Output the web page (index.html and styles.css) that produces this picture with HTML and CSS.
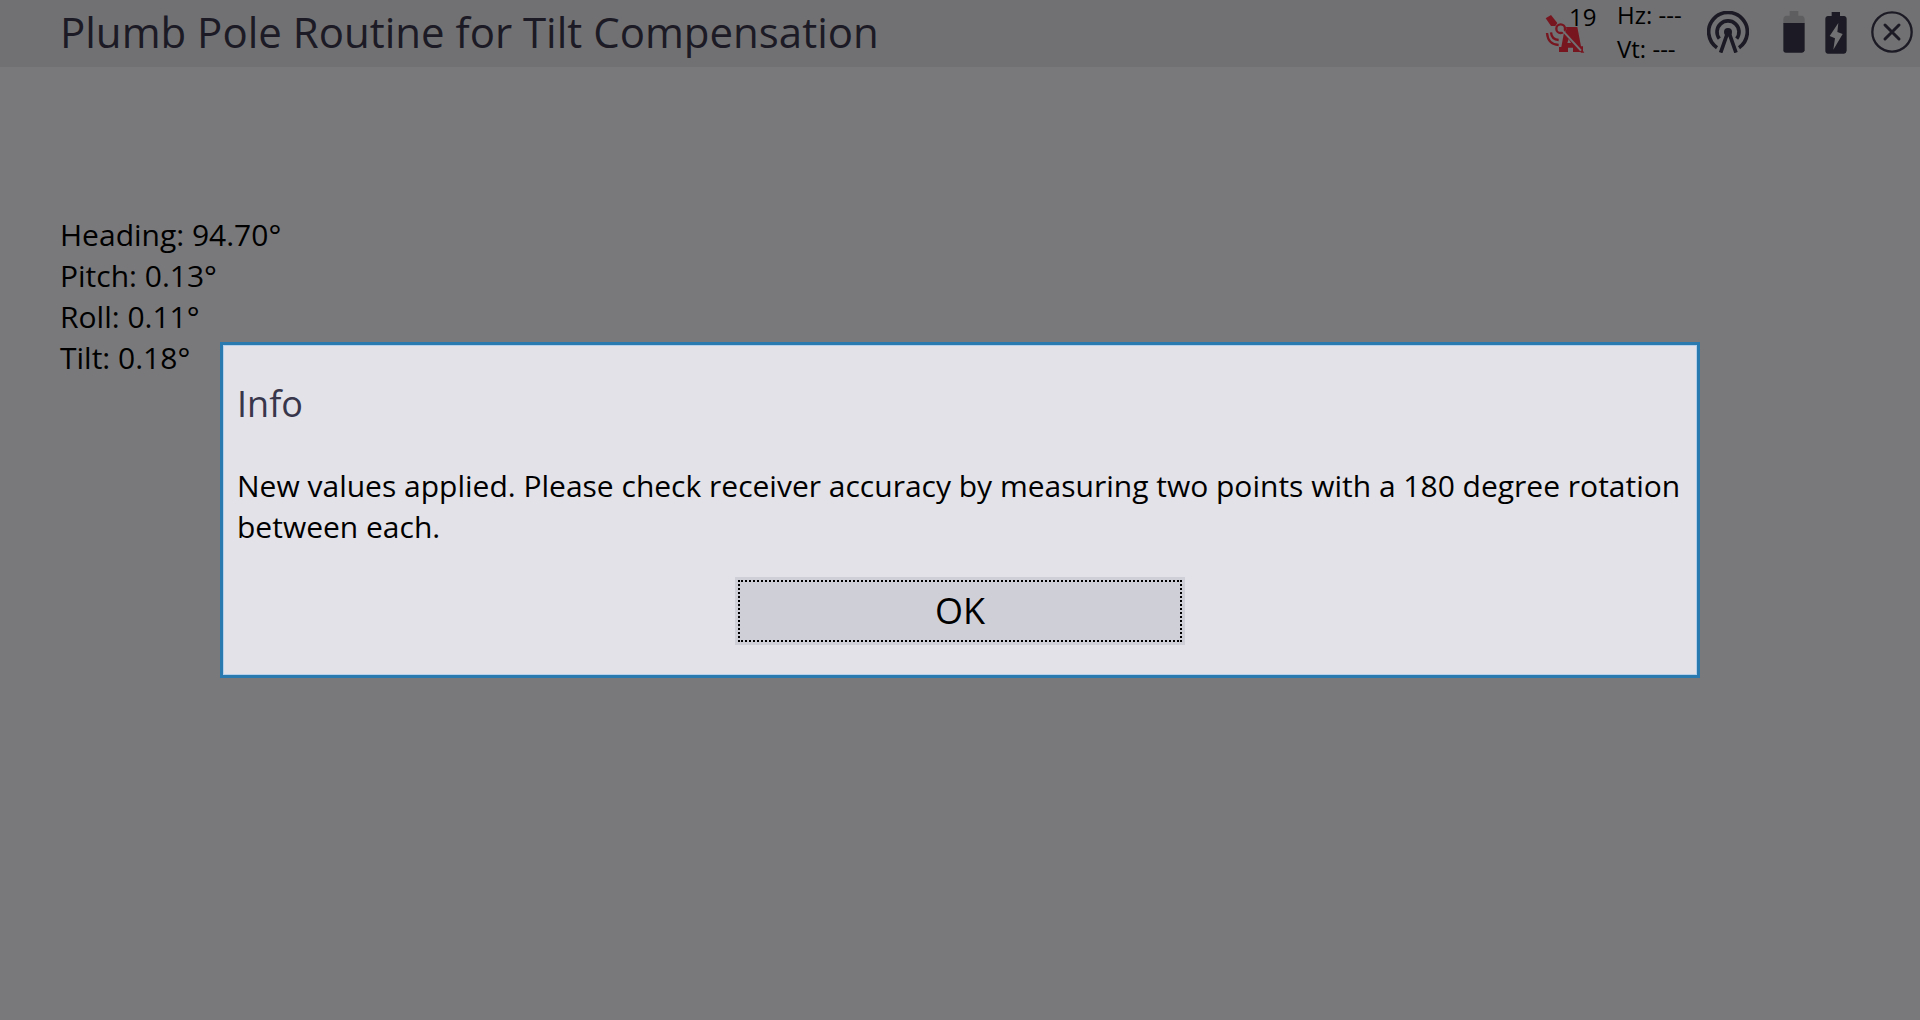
FILE: index.html
```html
<!DOCTYPE html>
<html lang="en">
<head>
<meta charset="utf-8">
<title>Plumb Pole Routine for Tilt Compensation</title>
<link rel="stylesheet" href="styles.css">
</head>
<body>
<header class="topbar">
  <h1 class="title">Plumb Pole Routine for Tilt Compensation</h1>
  <div class="status">
    <div class="satellites">
      <svg class="icon" viewBox="0 -6 126 126" aria-hidden="true">
        <g class="red-line">
          <path d="M18 58Q20 80 41 81"/>
          <path d="M6 60Q9 95 41 96"/>
        </g>
        <path class="red" d="M56 42H97L108 100H114V117H84V104H69V117H42V102H49L56 64Z"/>
        <path class="gap" d="M71 78L67 90H78Z"/>
        <path class="red" d="M57 50L66 46L118 119H108Z"/>
        <circle class="gap" cx="47" cy="47" r="17"/>
        <circle class="red-line" cx="47" cy="47" r="13"/>
        <path class="gap-line" d="M50 50L108 113"/>
        <path class="red" d="M2 16L18 6L37 30L31 39L18 39Z"/>
      </svg>
      <span class="count">19</span>
    </div>
    <div class="angles">
      <div>Hz: ---</div>
      <div>Vt: ---</div>
    </div>
    <svg class="icon antenna" viewBox="0 0 126 126" aria-hidden="true">
      <path class="dark-line" d="M30 110A58 58 0 1 1 96 110"/>
      <path class="dark-line" d="M37 83A33 33 0 1 1 89 83"/>
      <circle class="dark" cx="63" cy="63" r="12"/>
      <path class="dark-line" d="M63 62L41 125M65 62L87 125"/>
    </svg>
    <svg class="battery" viewBox="0 0 66 129" aria-hidden="true">
      <path class="spent" d="M20 0H46V14H58Q65 16 65 24V37H1V24Q1 16 8 14H20Z"/>
      <path class="dark" d="M1 36H65V118Q64 125 57 125H9Q1 125 1 118Z"/>
    </svg>
    <svg class="battery charging" viewBox="0 0 66 129" aria-hidden="true">
      <path class="dark" d="M20 3H45V15H57Q65 16 65 24V119Q64 127 57 128H9Q1 127 1 119V24Q1 16 9 15H20Z"/>
      <path class="gap" d="M40 36L14 75L30 82L25 116L53 69L37 63Z"/>
    </svg>
    <button class="close" type="button" aria-label="Close">
      <svg class="icon" viewBox="0 0 126 126" aria-hidden="true">
        <circle class="thin-line" cx="63" cy="63" r="59"/>
        <path class="cross-line" d="M42 42L84 84M84 42L42 84"/>
      </svg>
    </button>
  </div>
</header>
<main class="readings">
  <div>Heading: 94.70°</div>
  <div>Pitch: 0.13°</div>
  <div>Roll: 0.11°</div>
  <div>Tilt: 0.18°</div>
</main>
<div class="backdrop">
  <section class="dialog" role="alertdialog" aria-modal="true" aria-labelledby="info-title" aria-describedby="info-text">
    <h2 class="dialog-title" id="info-title">Info</h2>
    <p class="message" id="info-text">New values applied. Please check receiver accuracy by measuring two points with a 180 degree rotation between each.</p>
    <button class="ok" type="button"><span class="focus-ring">OK</span></button>
  </section>
</div>
</body>
</html>
```
FILE: styles.css
```css
* {
  box-sizing: border-box;
}

body {
  margin: 0;
  min-height: 100vh;
  background: #f2f2f6;
  color: #000;
  font-family: "Open Sans", "Noto Sans", sans-serif;
  font-size: 30px;
  line-height: 41px;
}

button {
  border: 0;
  padding: 0;
  font: inherit;
  color: inherit;
}

.topbar {
  display: flex;
  justify-content: space-between;
  padding: 0 7px 3px 60px;
  background: #e3e3e6;
}

.title {
  margin: 0;
  font-size: 42px;
  font-weight: 400;
  line-height: 64px;
  color: #38364a;
}

.status {
  display: flex;
  align-items: center;
  height: 64px;
}

.satellites {
  position: relative;
  display: flex;
  width: 72px;
}

.count {
  position: absolute;
  top: -11px;
  left: 24px;
  font-size: 24px;
  line-height: 34px;
}

.angles {
  width: 90px;
  font-size: 24px;
  line-height: 34px;
}

.icon {
  display: block;
  width: 42px;
  height: 42px;
}

.antenna {
  margin-right: 34px;
}

.battery {
  width: 22px;
  height: 43px;
}

.charging {
  margin: 0 24px 0 20px;
}

.close {
  background: none;
}

.red {
  fill: #f02c40;
}

.red-line {
  fill: none;
  stroke: #f02c40;
  stroke-width: 7;
}

.dark {
  fill: #38364a;
}

.spent {
  fill: #bcbcc0;
}

.gap {
  fill: #e3e3e6;
}

.gap-line {
  fill: none;
  stroke: #e3e3e6;
  stroke-width: 6;
}

.dark-line {
  fill: none;
  stroke: #38364a;
  stroke-width: 11;
}

.thin-line {
  fill: none;
  stroke: #38364a;
  stroke-width: 7;
}

.cross-line {
  fill: none;
  stroke: #38364a;
  stroke-width: 9;
  stroke-linecap: round;
}

.readings {
  padding: 147px 60px;
}

.backdrop {
  position: fixed;
  inset: 0;
  display: flex;
  align-items: center;
  padding: 0 220px;
  background: rgba(0, 0, 0, 0.5);
}

.dialog {
  flex: 1;
  padding: 34px 14px 30px;
  border: 3px solid #2a7ab0;
  background: #e3e2e8;
  box-shadow: inset 0 0 0 1px #b4d0ea;
}

.dialog-title {
  margin: 0 0 37px;
  font-size: 36px;
  font-weight: 400;
  line-height: 49px;
  color: #38364a;
}

.message {
  margin: 0 0 30px;
}

.ok {
  display: block;
  width: 450px;
  max-width: 100%;
  margin: 0 auto;
  padding: 3px;
  background: #cfcfd8;
  font-size: 36px;
  line-height: 58px;
}

.focus-ring {
  display: block;
  border: 2px dotted #000;
}
```
